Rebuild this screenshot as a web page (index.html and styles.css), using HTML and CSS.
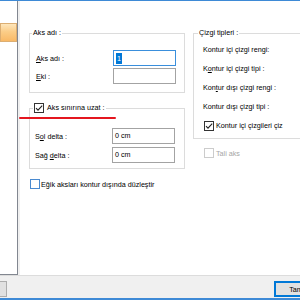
FILE: index.html
```html
<!DOCTYPE html>
<html lang="tr">
<head>
  <meta charset="UTF-8" />
  <title>Aks ayarları</title>
  <link rel="stylesheet" href="styles.css">
</head>
<body>
  <div class="window">
    <div class="main">
      <div class="list">
        <div class="item sel"></div>
      </div>

      <div class="panel">
        <div class="cols">
          <div class="col">
            <div class="group g1">
              <div class="group-title">Aks adı :</div>
              <div class="form">
                <label><u>A</u>ks adı :</label>
                <div class="input focus"><span class="sel-text">1</span></div>
                <label><u>E</u>ki :</label>
                <div class="input"></div>
              </div>
            </div>

            <div class="group g2">
              <div class="group-title">
                <svg class="check" width="10" height="10" viewBox="0 0 10 10"><rect x="0.5" y="0.5" width="9" height="9" fill="#fff" stroke="#333"/><path d="M2 5.2 4 7.2 8.2 2.6" fill="none" stroke="#222" stroke-width="1.1"/></svg>
                Aks sınırına uzat :
              </div>
              <div class="form">
                <label>S<u>o</u>l delta :</label>
                <div class="input">0 cm</div>
                <label>Sağ <u>d</u>elta :</label>
                <div class="input">0 cm</div>
              </div>
            </div>

            <div class="check-row eg">
              <svg class="check" width="10" height="10" viewBox="0 0 10 10"><rect x="0.5" y="0.5" width="9" height="9" fill="#fff" stroke="#4a8ad0"/></svg>
              <span>Eğik aksları kontur dışında düzleştir</span>
            </div>
          </div>

          <div class="col">
            <div class="group g3">
              <div class="group-title">Çizgi tipleri :</div>
              <div class="lines">
                <div class="line">Kontur içi çizgi rengi:</div>
                <div class="line">K<u>o</u>ntur içi çizgi tipi :</div>
                <div class="line">Kon<u>t</u>ur dışı çizgi rengi :</div>
                <div class="line">Kontur dışı çizgi tipi :</div>
                <div class="line check-row">
                  <svg class="check" width="10" height="10" viewBox="0 0 10 10"><rect x="0.5" y="0.5" width="9" height="9" fill="#fff" stroke="#333"/><path d="M2 5.2 4 7.2 8.2 2.6" fill="none" stroke="#222" stroke-width="1.1"/></svg>
                  <span>Kontur içi çizgileri çiz</span>
                </div>
              </div>
            </div>

            <div class="check-row tali">
              <svg class="check" width="10" height="10" viewBox="0 0 10 10"><rect x="0.5" y="0.5" width="9" height="9" fill="#fff" stroke="#cccccc"/></svg>
              <span>Tali aks</span>
            </div>
          </div>
        </div>
      </div>
    </div>

    <div class="bar">
      <button class="btn prev"></button>
      <button class="btn ok">Tamam</button>
    </div>

    <div class="mark"></div>
  </div>
</body>
</html>
```

FILE: styles.css
```css
body {
  margin: 0;
  font-family: 'Liberation Sans', Arial, sans-serif;
  font-size: 7.2px;
  color: #000;
}
.window {
  position: relative;
  width: 300px;
  height: 300px;
  box-sizing: border-box;
  border-top: 1px solid #3e8ad6;
  border-bottom: 2px solid #3e8ad6;
  background-color: #f0f0f0;
  display: flex;
  flex-direction: column;
  overflow: hidden;
}
.main {
  display: flex;
  height: 274px;
}
.list {
  width: 18px;
  box-sizing: border-box;
  padding-top: 22px;
  background-color: #fff;
  border-right: 1px solid #828790;
  border-bottom: 1px solid #828790;
}
.item {
  height: 19px;
  box-sizing: border-box;
}
.item.sel {
  border: 1px solid #dcae72;
  background: linear-gradient(#fee6bb, #fbcd88 45%, #f9b966);
}
.panel {
  flex: 1;
  margin-left: 2px;
  padding: 32px 0 0 9px;
  background-color: #fff;
  overflow: hidden;
}
.cols {
  display: grid;
  grid-template-columns: 156px 140px;
  column-gap: 8px;
  align-items: start;
}
.group {
  border: 1px solid #dcdcdc;
}
.group-title {
  display: flex;
  align-items: center;
  gap: 3px;
  width: max-content;
  height: 10px;
  line-height: 10px;
  margin: -6px 0 0 2px;
  padding: 0 1px;
  background-color: #fff;
}
.g2 .group-title {
  margin-left: 3px;
}
.g3 .group-title {
  margin-left: 4px;
}
.form {
  display: grid;
  grid-template-columns: 77px 63px;
  align-items: center;
}
.g1 .form {
  margin-top: 12px;
  padding: 0 8px 8px 6px;
  row-gap: 2px;
}
.g2 {
  margin-top: 15px;
}
.g2 .form {
  margin-top: 15px;
  padding: 0 8px 5px 5px;
  row-gap: 3px;
}
.input {
  height: 16px;
  box-sizing: border-box;
  border: 1px solid #a3a3a3;
  background-color: #fff;
  padding-left: 2px;
  line-height: 14px;
}
.input.focus {
  border-color: #3a8fdc;
}
.sel-text {
  display: inline-block;
  height: 11px;
  line-height: 11px;
  padding: 0 1px;
  background-color: #0078d7;
  color: #fff;
  vertical-align: middle;
}
.check {
  display: block;
  flex: none;
}
.check-row {
  display: flex;
  align-items: center;
  gap: 2px;
}
.eg {
  margin: 10px 0 0 1px;
  gap: 1px;
}
.lines {
  margin-top: 2px;
  padding: 0 0 3px 9px;
}
.line {
  height: 19px;
  line-height: 19px;
}
.line.check-row {
  margin-left: 1px;
}
.tali {
  margin-top: 9px;
  padding-left: 11px;
  color: #a6a6a6;
}
.bar {
  flex: 1;
  display: flex;
  align-items: flex-start;
  padding-top: 5px;
  border-top: 1px solid #dcdcdc;
}
.btn {
  height: 16px;
  box-sizing: border-box;
  border: 1px solid #adadad;
  background-color: #e1e1e1;
  font-family: inherit;
  font-size: 7.2px;
  color: #000;
  padding: 0;
  text-align: center;
}
.btn.prev {
  width: 40px;
  margin-left: -33px;
}
.btn.ok {
  width: 54px;
  margin-left: auto;
  margin-right: -28px;
  border-color: #0078d7;
  box-shadow: inset 0 0 0 1px #0078d7;
}
.mark {
  position: absolute;
  left: 19px;
  top: 116px;
  width: 97px;
  height: 2px;
  border-radius: 1px;
  background-color: #e4161f;
}
```
